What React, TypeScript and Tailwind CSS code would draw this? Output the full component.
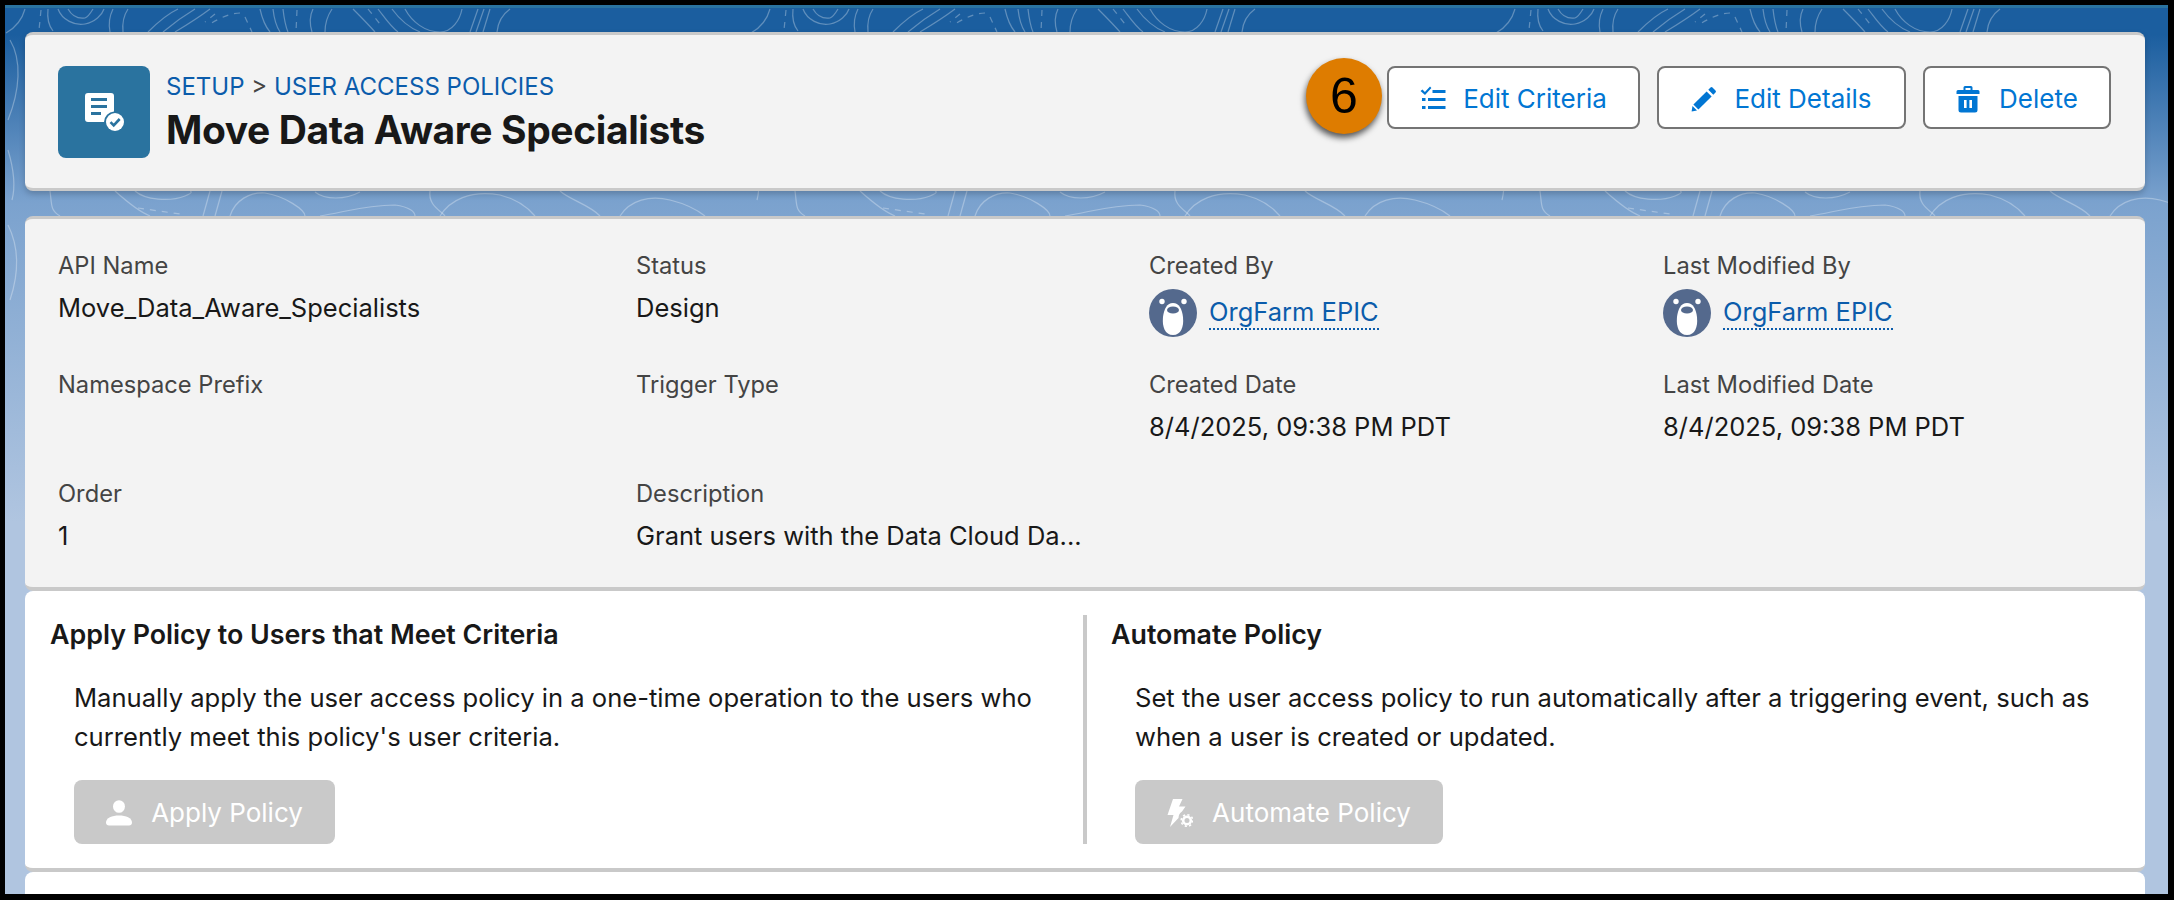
const FONT = "font-['Inter','Liberation_Sans',sans-serif]";

const contourLines = [
  'M25 9C22 20 15 28 6 33', 'M48 9C47 18 49 26 53 31', 'M58 9C62 20 75 26 85 24C95 22 102 15 104 9',
  'M68 9C72 16 78 19 85 18C88 17 90 14 93 9', 'M113 9C110 15 108 22 110 32', 'M128 9C124 15 122 22 123 32',
  'M178 9C165 15 155 25 148 32', 'M195 9C180 18 170 26 163 32', 'M210 9C198 18 185 26 175 32',
  'M260 9C262 18 265 26 270 32', 'M273 9C274 18 276 26 280 32', 'M283 9C284 18 285 25 288 32',
  'M313 9C310 15 309 22 312 32', 'M332 9C328 15 325 22 325 32', 'M353 9C360 16 368 24 375 32',
  'M378 9C385 18 390 26 398 32', 'M392 9C400 20 410 28 420 32', 'M405 9C412 22 425 32 440 32C452 32 460 20 462 9',
  'M470 32L478 9', 'M476 32L484 9', 'M483 32L490 9', 'M497 32C498 22 503 14 510 9',
  'M50 191C52 205 50 210 60 216', 'M115 191C125 200 140 212 150 216', 'M135 191C145 200 170 202 185 196C195 192 190 191 190 191',
  'M210 191L203 216', 'M222 191L215 216', 'M230 216C235 200 250 192 265 193C285 196 305 210 305 216',
  'M315 192C325 200 345 200 360 192', 'M320 216C345 212 365 205 395 205C410 207 415 212 415 216',
  'M430 191C428 205 440 210 445 216', 'M440 216C450 200 470 190 500 195C520 200 530 210 535 216',
  'M560 191C570 200 590 205 600 216', 'M620 216C630 200 650 195 670 200C690 205 700 212 705 216',
  'M10 40C22 60 20 90 8 120', 'M8 150C14 170 16 185 12 200', 'M8 225C18 245 20 270 10 300',
];

const contourDashes = [
  'M41 10L39 30', 'M215 14L205 22', 'M240 13C230 13 220 18 210 24', 'M245 17L252 32', 'M297 10L296 32',
  'M368 9L380 24', 'M138 208L180 214',
];

function TopoBackground() {
  return (
    <svg className="absolute inset-0 w-full h-full" aria-hidden="true">
      <defs>
        <pattern id="topo" x="-5" y="-8" width="745" height="900" patternUnits="userSpaceOnUse">
          {contourLines.map(d => (
            <path key={d} d={d} fill="none" stroke="#fff" strokeOpacity="0.3" strokeWidth="1.2" />
          ))}
          {contourDashes.map(d => (
            <path key={d} d={d} fill="none" stroke="#fff" strokeOpacity="0.3" strokeWidth="1.2" strokeDasharray="6 6" />
          ))}
        </pattern>
      </defs>
      <rect width="100%" height="100%" fill="url(#topo)" />
    </svg>
  );
}

function PolicyIcon() {
  return (
    <svg width="39" height="38" viewBox="0 0 39 38" aria-hidden="true">
      <path d="M3 0h23a3 3 0 0 1 3 3v15.500A11 11 0 0 0 19 29H3a3 3 0 0 1-3-3V3a3 3 0 0 1 3-3z" fill="#fff" />
      <rect x="6" y="5" width="16" height="3" fill="#2a739f" />
      <rect x="6" y="12" width="16" height="3" fill="#2a739f" />
      <rect x="6" y="19" width="10" height="3" fill="#2a739f" />
      <circle cx="30" cy="29" r="9" fill="#fff" />
      <path d="M25.500 29.200l3.200 3.200 6-6.400" fill="none" stroke="#2a739f" strokeWidth="2.600" />
    </svg>
  );
}

function CriteriaIcon() {
  return (
    <svg width="26" height="26" viewBox="0 0 26 26" fill="#0176d3" aria-hidden="true">
      <path d="M0.5 5l2-1.6 2.4 2.6L10 0.5l1.4 1.4-6.4 7.2z" />
      <rect x="12.5" y="4" width="13" height="3" />
      <rect x="2" y="12" width="3.5" height="3" />
      <rect x="8" y="12" width="17.5" height="3" />
      <rect x="2" y="20" width="3.5" height="3" />
      <rect x="8" y="20" width="17.5" height="3" />
    </svg>
  );
}

function PencilIcon() {
  return (
    <svg width="26" height="26" viewBox="0 0 26 26" fill="#0176d3" aria-hidden="true">
      <path d="M19.5 1.5a1.4 1.4 0 0 1 2 0l3 3a1.4 1.4 0 0 1 0 2l-2.2 2.2-5-5z" />
      <path d="M15.6 5.4l5 5L7.4 23.6l-5-5z" />
      <path d="M1.5 20l4.5 4.5L0.6 25.6z" />
    </svg>
  );
}

function TrashIcon() {
  return (
    <svg className="mr-[2px]" width="24" height="28" viewBox="0 0 24 28" aria-hidden="true">
      <path fill="#0176d3" d="M9 1h6a1.5 1.5 0 0 1 1.5 1.5V5H22a1.5 1.5 0 0 1 1.5 1.5V9H.5V6.5A1.5 1.5 0 0 1 2 5h5.5V2.500A1.500 1.500 0 0 1 9 1zM9.500 3v2h5V3zM2.500 11h19v14a2.500 2.500 0 0 1-2.500 2.500H5A2.500 2.500 0 0 1 2.500 25z" />
      <rect x="8" y="15" width="2.600" height="8" fill="#fff" />
      <rect x="13.400" y="15" width="2.600" height="8" fill="#fff" />
    </svg>
  );
}

function PersonIcon() {
  return (
    <svg width="26" height="26" viewBox="0 0 26 26" fill="#fff" aria-hidden="true">
      <ellipse cx="13" cy="6.500" rx="6" ry="6.300" />
      <path d="M0 22.500C0 18 6 15.500 13 15.500S26 18 26 22.500c0 2-1.200 3-3 3H3c-1.800 0-3-1-3-3z" />
    </svg>
  );
}

function BoltGearIcon() {
  return (
    <svg width="26" height="28" viewBox="0 0 26 28" fill="#fff" aria-hidden="true">
      <path d="M6 0h9.500l-3.500 7.500h6.500L15 12.500a8 8 0 0 0-3.500 6.500L3 28l3.500-12H0.500z" />
      <circle cx="20" cy="21.500" r="3.800" fill="none" stroke="#fff" strokeWidth="2.600" />
      <circle cx="20" cy="21.500" r="5.800" fill="none" stroke="#fff" strokeWidth="1.600" strokeDasharray="2.200 2.300" />
    </svg>
  );
}

function BearAvatar() {
  return (
    <svg width="48" height="48" viewBox="0 0 48 48" aria-hidden="true">
      <circle cx="24" cy="24" r="24" fill="#54698d" />
      <circle cx="13" cy="12.500" r="2.700" fill="#fff" />
      <circle cx="35" cy="12.500" r="2.700" fill="#fff" />
      <path d="M24 14C30 14 33 20 34 28C35 38 32 46 24 46C16 46 13 38 14 28C15 20 18 14 24 14z" fill="#fff" />
      <ellipse cx="24" cy="21" rx="6" ry="3.600" fill="#54698d" />
    </svg>
  );
}

function OutlineButton({ icon, label, className }: { icon: React.ReactNode; label: string; className: string }) {
  return (
    <button className={`h-[63px] pt-[2px] flex items-center justify-center gap-[17px] bg-white border-2 border-[#747474] rounded-lg text-[#0176d3] text-[26px] ${className}`}>
      {icon}
      <span>{label}</span>
    </button>
  );
}

function DisabledButton({ icon, label, className }: { icon: React.ReactNode; label: string; className: string }) {
  return (
    <button disabled className={`h-16 mt-6 ml-6 pt-px flex items-center justify-center gap-[19px] bg-[#c9c9c9] rounded-lg text-white text-[26px] ${className}`}>
      {icon}
      <span>{label}</span>
    </button>
  );
}

function Field({ label, value }: { label: string; value?: string }) {
  return (
    <div>
      <div className="h-[30px] leading-[30px] text-[23.7px] text-[#444444]">{label}</div>
      {value && <div className="mt-[9px] h-9 leading-9 text-[25.5px] text-[#181818] whitespace-nowrap">{value}</div>}
    </div>
  );
}

function UserField({ label }: { label: string }) {
  return (
    <div>
      <div className="h-[30px] leading-[30px] text-[23.7px] text-[#444444]">{label}</div>
      <div className="mt-2 flex items-center gap-3">
        <BearAvatar />
        <a className="text-[25.5px] text-[#0b5cab] leading-8 border-b-2 border-dotted border-[#0b5cab]">OrgFarm EPIC</a>
      </div>
    </div>
  );
}

export default function App() {
  return (
    <div className={`h-screen bg-black pt-[5px] pl-[5px] pr-[6px] pb-[6px] ${FONT}`}>
      <div className="relative h-full overflow-hidden border-t-[3px] border-[#2a73a0] px-5 pt-6 bg-[linear-gradient(#1b5e9f_0,#1b5e9f_3%,#7ba2ce_22%,#b0c5e0_58%,#b0c5e0_100%)]">
        <TopoBackground />

        <div className="relative w-[2120px]">
          {/* page header */}
          <div className="h-[159px] flex justify-between pt-[31px] pl-[33px] pr-[34px] bg-[#f3f3f3] border-t-[3px] border-b-[3px] border-[#c9c9c9] rounded-lg shadow-[0_3px_6px_rgba(0,0,0,0.2)]">
            <div className="flex gap-4">
              <div className="w-[92px] h-[92px] flex items-center justify-center rounded-lg bg-[#2a739f]">
                <PolicyIcon />
              </div>
              <div className="mt-1">
                <div className="text-[24px] leading-[34px] text-[#0b5cab]">
                  SETUP <span className="text-[#444444]">&gt;</span> USER ACCESS POLICIES
                </div>
                <h1 className="mt-px text-[39px] leading-[50px] font-bold text-[#181818] tracking-[-0.4px]">Move Data Aware Specialists</h1>
              </div>
            </div>

            <div className="relative h-[63px] flex gap-[17px]">
              <div className="absolute left-[-81px] top-[-8px] w-[76px] h-[76px] flex items-center justify-center rounded-full bg-[#de7c00] text-black text-[50px] font-['Liberation_Sans',sans-serif] shadow-[-1px_4px_6px_rgba(0,0,0,0.65)]">
                6
              </div>
              <OutlineButton icon={<CriteriaIcon />} label="Edit Criteria" className="w-[253px]" />
              <OutlineButton icon={<PencilIcon />} label="Edit Details" className="w-[249px]" />
              <OutlineButton icon={<TrashIcon />} label="Delete" className="w-[188px]" />
            </div>
          </div>

          {/* record details */}
          <div className="mt-[25px] h-[375px] pt-8 pl-[33px] bg-[#f3f3f3] border-t-[3px] border-b-4 border-[#c9c9c9] rounded-lg">
            <div className="grid grid-cols-[578px_513px_514px_1fr] grid-rows-[119px_109px_auto]">
              <Field label="API Name" value="Move_Data_Aware_Specialists" />
              <Field label="Status" value="Design" />
              <UserField label="Created By" />
              <UserField label="Last Modified By" />
              <Field label="Namespace Prefix" />
              <Field label="Trigger Type" />
              <Field label="Created Date" value="8/4/2025, 09:38 PM PDT" />
              <Field label="Last Modified Date" value="8/4/2025, 09:38 PM PDT" />
              <Field label="Order" value="1" />
              <Field label="Description" value="Grant users with the Data Cloud Da..." />
            </div>
          </div>

          {/* apply / automate */}
          <div className="h-[281px] flex pt-6 bg-white border-b-4 border-[#c9c9c9] rounded-lg text-[#181818]">
            <div className="w-[1058px] pl-[25px]">
              <h2 className="h-[38px] leading-[38px] text-[26.8px] font-semibold">Apply Policy to Users that Meet Criteria</h2>
              <p className="mt-[25px] ml-6 w-[1000px] text-[25.6px] leading-[39px]">
                Manually apply the user access policy in a one-time operation to the users who currently meet this policy's user criteria.
              </p>
              <DisabledButton icon={<PersonIcon />} label="Apply Policy" className="w-[261px]" />
            </div>
            <div className="h-[229px] border-l-4 border-[#c9c9c9] pl-6">
              <h2 className="h-[38px] leading-[38px] text-[26.8px] font-semibold">Automate Policy</h2>
              <p className="mt-[25px] ml-6 w-[1000px] text-[25.6px] leading-[39px]">
                Set the user access policy to run automatically after a triggering event, such as when a user is created or updated.
              </p>
              <DisabledButton icon={<BoltGearIcon />} label="Automate Policy" className="w-[308px]" />
            </div>
          </div>

          {/* next card, cut off by the frame */}
          <div className="h-10 bg-white rounded-lg" />
        </div>
      </div>
    </div>
  );
}
